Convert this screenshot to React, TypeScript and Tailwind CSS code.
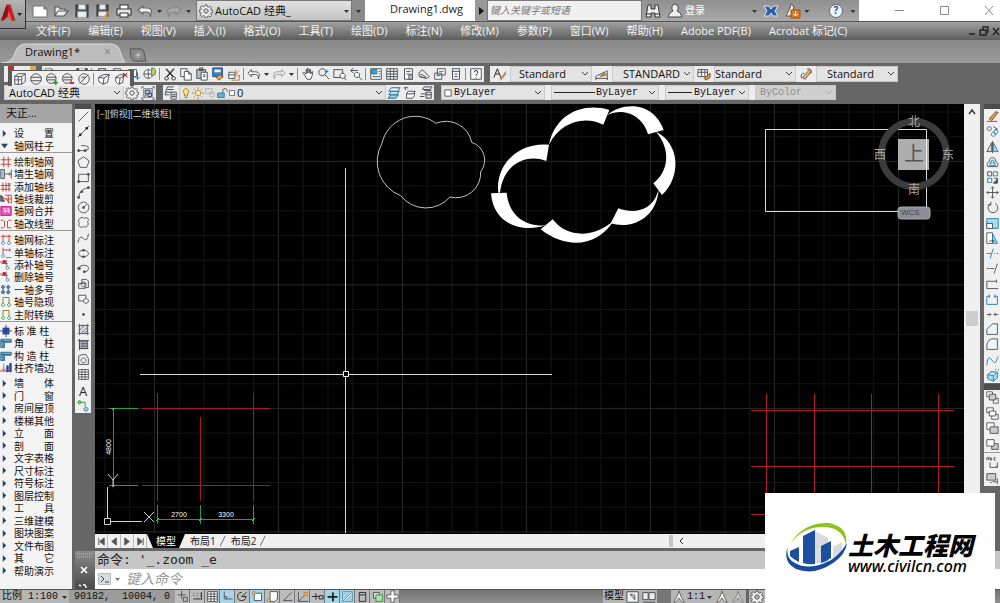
import type { ReactNode } from "react";

// each part of a glyph is [path, stroke, fill] on a 16x16 grid
type Part = [string, string?, string?];

const INK = "#4a4f55";
const BLUE = "#1c7ea6";
const RED = "#c0272d";
const GREEN = "#2f8f3a";
const SKY = "#a8dcee";

const GLYPHS: Record<string, Part[]> = {
  // files and editing
  new: [["M3 2h7l3 3v9H3zM10 2v3h3", "#777", "#fff"]],
  page: [["M1 3h11l3 3v8H1zM12 3v3h3", "#777", "#fff"]],
  open: [["M2 13V4h4l1 2h5v2M2 13l3-5h10l-4 5z", "#555", "#eee"]],
  save: [["M2 2h12v12H2z", "#333", "#4a5563"], ["M5 2h6v4H5zM4 9h8v5H4z", "#ddd", "#eee"]],
  saveas: [["M2 2h11v11H2z", "#333", "#4a5563"], ["M5 2h5v4H5zM4 9h7v4H4z", "#ddd", "#eee"], ["M9 14l5-6", "#e3902c"], ["M10 15l5-6", "#e3902c"]],
  print: [["M4 6V2h8v4", "#333", "#fff"], ["M1 6h14v6H1z", "#333", "#e8e8e8"], ["M4 10h8v4H4z", "#333", "#fff"]],
  preview: [["M3 2h8v12H3z", INK, "#fff"], ["M12 8a3 3 0 1 0 0 6a3 3 0 0 0 0-6M14 13l2 2", RED]],
  publish: [["M2 3h9v8H2z", INK, "#fff"], ["M12 6v8M9 11l3 3 3-3", BLUE]],
  globe: [["M6 3a5 5 0 1 0 .1 0M6 3v10M1 8h10", INK, "#fff"], ["M10 1a4.500 4.500 0 1 1-.1 9V5z", "#6b7a34", "#c3d07c"]],
  cut: [["M3 2l8 9M13 2L5 11M4 11a2 2 0 1 0 .1 0M12 11a2 2 0 1 0 .1 0", "#222"], ["M4 2l8 9M12 2L4 11", "#222"]],
  copy: [["M2 2h7v9H2z", INK, "#fff"], ["M6 5h5l3 3v7H6zM11 5v3h3", INK, "#fff"]],
  paste: [["M2 3h10v10H2zM5 1h4v3H5z", INK, "#bbb"], ["M7 6h7v9H7zM9 9h3M9 11h3", INK, "#fff"]],
  match: [["M2 1h11v10H2z", "#1e4f8e", "#3f7fc1"], ["M4 3h7v3H4z", "none", "#fff"], ["M6 12l4-3 4 2-5 4z", "#8a5a1c", "#e8ac45"]],
  block: [["M2 6h7v7H2zM2 9h7", INK, "#fff"], ["M10 3v5M8 6l4 4M14 4l-4 4M12 10h3M5 15h9V9", "#b98120"]],
  undo: [["M5 3L1 7l4 4V8.500h5q3 0 3 5 3-8-3-8H5z", INK, "#fff"]],
  redo: [["M11 3l4 4-4 4V8.500H6q-3 0-3 5-3-8 3-8h5z", "#999", "#eee"]],
  undoLight: [["M6 3L1 7l5 4V9h4q4 0 3 5 4-9-3-9H6z", "#666", "#eee"]],
  redoLight: [["M10 3l5 4-5 4V9H6q-4 0-3 5-4-9 3-9h4z", "#888", "#aaa"]],
  hand: [["M4 9L2 7l1-1 3 2V3h1v4V2h2v5l1-4h1v5l2-3v4l-2 5H7z", INK, "#fff"]],
  zoom: [["M6 2a4 4 0 1 0 .1 0M9 9l5 5", INK], ["M11 3v4M9 5h4", BLUE]],
  zoomwin: [["M1 3h10v9H1z", INK], ["M11 7a3 3 0 1 0 .1 0M13 12l2 3", INK, "#fff"]],
  zoomprev: [["M5 1L2 4l3 3M2 4h8", INK], ["M9 6a3 3 0 1 0 .1 0M11 11l4 4", INK, "#fff"]],
  props: [["M2 2h12v12H2z", INK, "#fff"], ["M3 3h6v5H3z", BLUE, "#3ba0cc"], ["M11 5h2M11 8h2M4 11h9", INK]],
  table: [["M2 2h12v12H2zM2 5h12M2 8h12M2 11h12M6 2v12M10 2v12", INK, "#fff"]],
  palette: [["M4 2h9v12H4zM6 5h5M6 8h5", INK, "#fff"], ["M9 9h4v5H9z", INK, "#ccc"]],
  sheet: [["M2 7l4-4 3 3 5 5-3 2-8-2zM4 8l6 3M3 11l8 2", INK, "#eee"]],
  markup: [["M5 2h9v7H5zM2 7h8v7H2z", INK, "#fff"], ["M7 5h5M4 10h4", BLUE]],
  calc: [["M4 2h8v12H4zM4 5h8M6 8h4M6 11h4", INK, "#fff"]],
  help: [["M2 2h12v12H2z", INK, "#fff"], ["M6 6q0-2 2-2t2 2-2 3v1M8 12v1", "#224"]],
  // style bars
  textstyle: [["M1 12L5 2l4 10M3 8h4", "#222"], ["M8 14l7-9", "#a0642a"], ["M9 15l6-8", "#a0642a"]],
  dimstyle: [["M1 13h13M1 10v5M14 4v11M2 10l11-5", INK], ["M6 11l4-5 3 3z", "#a0642a", "#c9904d"]],
  tablestyle: [["M1 3h11v8H1zM1 6h11M5 3v8M9 3v8", INK, "#fff"], ["M8 13l7-6v5l-5 3z", "#8f5a25", "#c9904d"]],
  leader: [["M3 13q-2-5 3-6M9 3a3 3 0 1 1 3 5", INK], ["M4 12l8-9 2 2-7 9z", "#8f5a25", "#d9b78c"]],
  // solids and view styles
  box: [["M2 5l4-3h8v9l-4 3H2zM2 5h8v9M10 5l4-3M2 9h8M6 5v9", INK, "#fff"]],
  sphere: [["M8 2a6 6 0 1 0 .1 0M2 6h12M2 10h12", INK, "#eee"]],
  sphereAdd: [["M7 2a5.500 5.500 0 1 0 .1 0M2 6h11M2 9h10", INK, "#eee"], ["M12 9v6M9 12h6", GREEN], ["M12.500 9v6M9 12.500h6", GREEN]],
  sphereSub: [["M7 2a5.500 5.500 0 1 0 .1 0M2 6h11M2 9h10", INK, "#eee"], ["M10 12h5M10 13h5", RED]],
  sphereOff: [["M8 2a6 6 0 1 0 .1 0M3 13L13 3M5 6h5", INK, "#eee"]],
  cube: [["M2 6q4-4 12-3l-2 9-5 2-5-3zM2 6l6 1 6-4M8 7l-1 7", INK, "#fff"]],
  cubeX: [["M2 6q4-4 9-3l-1 9-5 2-3-3zM2 6l5 1 5-3M7 7l-1 7", INK, "#fff"], ["M10 1l5 5M15 1l-5 5", RED], ["M11 1l4 5M15 2l-5 4", RED]],
  // layers
  layers: [["M4 1h7M4 4h7M2 7h7M1 10h5M4 1L1 10", INK], ["M8 7h6v8H8zM9 10h4M9 12h4", INK, "#ddd"]],
  layerA: [["M5 10h8l-3 4H1z", "#176f93", "#9bd3e6"], ["M5 6h9l-3 4H2z", "#176f93", "#c8e8f2"], ["M5 2h10l-3 4H2z", "#176f93", "#e3f3f8"]],
  layerB: [["M6 6h8l-2 3H4zM4 9v5h7l2-3V7", INK, "#fff"], ["M1 2h5M4 1L2 3l2 2", INK]],
  layerC: [["M6 1h9l-2 3H4zM6 5h8M2 9h6M1 12h5", INK], ["M8 7h6v7H8zM8 10h6", INK, "#ddd"]],
  bulb: [["M8 2a4 4 0 0 0-2 7v3h4V9a4 4 0 0 0-2-7M6 14h4", "#9a7a1a", "#ffe875"]],
  sun: [["M8 4.500a3.500 3.500 0 1 0 .1 0M8 0v3M8 13v3M0 8h3M13 8h3M2.500 2.500l2 2M11.500 11.500l2 2M13.500 2.500l-2 2M4.500 11.500l-2 2", "#a37b1c", "#fff2a0"]],
  freeze: [["M2 2h9v7H2zM8 7h6v6H8z", "#b4b4b4", "#ddd"]],
  unlock: [["M2 8h9v6H2z", BLUE, "#5db3d4"], ["M9 8V5q0-3 3-3 3 0 3 4", INK]],
  square: [["M3 3h10v10H3z", "#222", "#fff"]],
  gear: [["M8 5.500a2.500 2.500 0 1 0 .1 0M7 1h2l.5 2 1.500.7 2-1L14.300 4l-1 2 .7 1.200 2 .3v2l-2 .4-.7 1.400 1 1.800-1.500 1.500-2-1-1.400.6L9 16H7l-.5-2-1.500-.7-2 1L1.600 12.800l1-2L2 9.500l-2-.4v-2l2-.4.7-1.400-1-1.800L3.200 2l2 1L6.500 2.500z", "#555", "#eee"]],
  hatchbox: [["M3 3h10v10H3z", "#789", "#bcd"], ["M5 5h5v4H5zM8 8h4v4H8z", INK], ["M1 3V1h2M13 1h2v2M15 13v2h-2M3 15H1v-2M4 12l3-3", INK]],
  hatch2: [["M2 2h12v12H2z", "#4b93b5", "#c7e6f2"], ["M3 6l3-3M3 10l7-7M3 13L13 3M7 13l6-6M11 13l2-2", "#4b93b5"]],
  // drawing tools
  line: [["M2 14L14 2", INK]],
  xline: [["M1 15L15 1", INK], ["M3 11h2v2H3zM11 3h2v2h-2z", "#222", "#222"]],
  pline: [["M2 13h8q4 0 4-3t-4-3H5", INK], ["M1 12h2v2H1zM9 12h2v2H9z", INK, INK]],
  polygon: [["M8 1l7 5-3 8H4L1 6z", INK]],
  rect: [["M2 4h12v9H2z", INK], ["M1 12h2v2H1zM13 3h2v2h-2z", INK, INK]],
  arc: [["M2 14Q3 4 14 2", INK], ["M1 13h2v2H1zM5 6h2v2H5zM13 1h2v2h-2z", INK, INK]],
  circle: [["M8 1.500a6.500 6.500 0 1 0 .1 0M8 8l4-4", INK], ["M7 7h2v2H7z", INK, INK]],
  cloud: [["M5 2q3-1 4 1 4-2 5 1 0 2-1 3 2 3 0 5-2 3-5 1-3 2-5 0-2-2 0-4-2-2-1-4 1-2 3-3z", INK]],
  spline: [["M1 13Q3 3 8 8t6-6", INK]],
  ellipse: [["M8 4C0 4 0 12 8 12s8-8 0-8", INK], ["M7 3h2v2H7zM7 11h2v2H7z", INK, INK]],
  ellarc: [["M2 8q1-4 6-4 7 0 6 5-1 3-5 3", INK], ["M1 7h3v2H1zM8 11h2v2H8z", INK, INK]],
  insert: [["M2 8h8v6H2zM6 8V3h6l2 2v8h-4M8 6a3 3 0 1 0 .1 0", INK]],
  make: [["M2 4h9v7H2z", INK], ["M11 8a3 3 0 1 0 .1 0", INK, "#eee"]],
  point: [["M7 7h2v2H7z", INK, INK]],
  hatch: [["M3 3h10v10H3z", INK, "#d5dbe0"], ["M3 9l6-6M5 13l8-8M9 13l4-4M1 3h14M1 13h14M3 1v14M13 1v14", "#667"]],
  gradient: [["M3 4h10v9H3z", INK, "#aab"], ["M1 3h14M3 1v14M3 13h11M5 7h7M5 10h7", INK]],
  region: [["M2 14V4l4-2h5l3 5v7zM8 6a3 3 0 1 0 .1 0", INK]],
  group: [["M3 2a2 2 0 1 0 .1 0", GREEN, "#7fc77f"], ["M5 4h5v5", GREEN], ["M11 10a2.500 2.500 0 1 0 .1 0", BLUE, "#a6d6ef"]],
  // modify tools
  erase: [["M1 14h13", RED], ["M4 11l8-9 3 1-8 10z", "#7a4a20", "#d2a25a"]],
  copyobj: [["M4 2a2.500 2.500 0 1 0 .1 0M9 2l5 3-3 1", INK], ["M9 9a2.500 2.500 0 1 0 .1 0M12 6a2.500 2.500 0 1 0 .1 0", BLUE]],
  mirror: [["M7 2v11H1z", INK, "#ddd"], ["M9 2v11h6z", BLUE, SKY], ["M8 0v15", INK]],
  offset: [["M2 13q-2-5 2-6 0-5 4-5t4 5q4 1 2 6z", INK], ["M5 12q-2-3 1-3 0-4 2-4t2 4q3 0 1 3z", BLUE, SKY]],
  array: [["M2 1h5v5H2z", INK], ["M9 1h5v5H9zM2 9h5v5H2z", BLUE], ["M10 9h4v5", INK], ["M14 10v5H9z", INK, INK]],
  move: [["M8 1v14M1 8h14M6 3l2-2 2 2M6 13l2 2 2-2M3 6L1 8l2 2M13 6l2 2-2 2", INK]],
  rotate: [["M6 3a6 6 0 1 0 5 0M6 1v4H2", INK]],
  scale: [["M1 2h14v12H1z", BLUE, SKY], ["M1 8h7v6H1z", INK, "#fff"]],
  stretch: [["M1 1h7v13H1z", INK, "#fff"], ["M8 2l6 12H8z", BLUE, SKY], ["M4 11h6M8 9l2 2-2 2", INK]],
  trim: [["M1 8h5M10 8h1M13 8h2M5 14L9 2", BLUE]],
  extend: [["M1 8h3M5 8h5M10 14l4-12", INK]],
  breakAt: [["M1 4h12M1 4v9h14M13 2v4", INK]],
  break2: [["M5 4H1v10h13V4h-4M4 2v4M11 2v4", BLUE]],
  join: [["M1 8h5M10 8h5M4 6l2 2-2 2M12 6l-2 2 2 2", INK]],
  chamfer: [["M1 14V8l7-7h6v13z", INK, "#eaf6fb"]],
  fillet: [["M1 14V9q1-8 8-8h5v13z", INK, "#eaf6fb"]],
  blend: [["M1 14Q2 1 6 6t5 5 4-8", BLUE]],
  explode: [["M2 7l4-4 8 1v7l-5 4-7-3zM2 7l7 1 5-4M9 8v7", BLUE, SKY], ["M11 1l2-1M15 2l1-2", BLUE]],
  front: [["M1 1h7v6H1zM9 9h6v6H9z", INK, "#fff"], ["M4 4h8v7H4z", INK, "#ccc"]],
  back: [["M1 1h8v6H1zM7 9h8v6H7z", INK, "#fff"], ["M4 5h8v6H4z", INK, "#fff"]],
  above: [["M1 1h9v8H1z", INK, "#fff"], ["M5 6h10v8H5z", INK, "#ccc"]],
  below: [["M7 7h8v7H7z", INK, "#ccc"], ["M1 2h9v8H1z", INK, "#fff"]],
  textfront: [["M1 5V2h2v3M5 1v4h2V3H5M12 2h-2v3h2M5 8v6h9l-2-2M14 8v6", INK]],
  hatchback: [["M1 2h11v8H1z", INK, "#ccc"], ["M8 12h6v3M5 13h2M14 8v4", INK]],
  // panel marks
  grid: [["M1 5h14M1 11h14M5 1v14M11 1v14", RED]],
  wallgrid: [["M1 2h5v12H1z", INK, "#9cc7da"], ["M7 8h7M12 6l2 2-2 2M15 2v12", "#334"]],
  addaxis: [["M1 6h13M1 11h13M4 2v12M8 2v12M12 2v12", RED], ["M10 4h5", GREEN]],
  clip: [["M2 4l12 9M7 3h8v11M7 8h8M11 3v11", RED], ["M1 3l5 8H1z", "#333", "#678"]],
  merge: [["M1 2h14v12H1z", "#c2188b", "#e64fb4"], ["M4 5h3v6M9 5h3v6M4 8h8", "#fff"]],
  ltype: [["M1 3h4M11 3h4M1 13h4M9 13h6M6 4v8M10 4v8", RED]],
  dimaxis: [["M1 3h14M4 1v9M12 1v9", RED], ["M4 10a2 2 0 1 0 .1 0M12 10a2 2 0 1 0 .1 0", BLUE]],
  dimone: [["M4 1v9M4 4h10M12 2l2 2-2 2", RED], ["M4 10a2 2 0 1 0 .1 0M8 14h7", BLUE]],
  axisno: [["M0 4h9M2 6h8M8 1v6", RED], ["M4 2h3v3H4z", RED, RED], ["M9 6v4", BLUE], ["M10 10a2 2 0 1 0 .1 0", BLUE]],
  multi: [["M4 2a2 2 0 1 0 .1 0M11 2a2 2 0 1 0 .1 0M4 9a2 2 0 1 0 .1 0M11 9a2 2 0 1 0 .1 0M4 6v4M11 6v4", "#27508f", "#6b8cc0"]],
  hide: [["M4 2v8M4 2h8v8", "#7a6b20"], ["M4 10a2 2 0 1 0 .1 0M12 10a2 2 0 1 0 .1 0", GREEN]],
  column: [["M4 4h8v8H4zM8 0v16M0 8h16", "#1f3c88", "#3555a5"]],
  corner: [["M1 3h14v4H6v7H1z", "#24628a", "#76b0cf"], ["M1 6h13M4 3v11", "#24628a"]],
  flush: [["M0 12h15", RED], ["M9 5h2v8H9zM13 2h2v11h-2z", "#1f3c88", "#3555a5"], ["M5 2v10M3 9l2 3 2-3", "#d43a7a"]],
  // status bar
  infer: [["M7 1v10M2 6h10M9 9h5v5H9z", INK]],
  snap: [["M3 4h1M7 4h1M11 4h1M3 7h1M7 7h1M11 7h1M3 11h9M13 3v9", "#222"]],
  ortho: [["M4 2v9h10", INK], ["M4 8h3v3", INK]],
  polar: [["M7 3a5 5 0 1 0 5 5M7 8l6-5M7 8h6", "#222"]],
  osnap: [["M4 4h9v9H4z", INK, "#fff"], ["M2 2h3v3H2z", "#b77a3c", "#f6dcb8"]],
  osnap3: [["M5 2h9v9l-3 3H5z", INK, "#fff"], ["M2 11h3v3H2z", "#b77a3c", "#f6dcb8"]],
  angle: [["M13 3L3 13h11", INK]],
  ucs: [["M3 2v12h12M3 14l9-9", INK], ["M10 3h4v4h-4z", "#c8801f", "#f1b759"]],
  dyn: [["M1 8h9M6 4v8M10 7h5v4h-5z", "#222"]],
  cross: [["M2 8h12M8 3v11", "#111"], ["M2 9h12M9 3v11", "#111"]],
  quick: [["M4 3h8v11H4zM4 6h8", "#222"]],
  cycle: [["M3 3h7v7H3z", INK, "#ddd"], ["M6 6h8v8H6z", GREEN, "#b4dfb0"]],
  plus: [["M6 1h4v5h5v4h-5v5H6v-5H1V6h5z", "#555", "#fff"]],
  paper: [["M1 2h13v12H1z", INK, "#eee"], ["M5 5l5 6V6z", INK]],
  views: [["M1 3h6v8H1zM8 3h7v8H8zM1 14h14", INK, "#eee"]],
  anno: [["M8 1l2 6 4 7-3-1-3-4-3 4-3 1 4-7z", "#666", "#fff"]],
  annoOn: [["M8 1l2 6 4 7-3-1-3-4-3 4-3 1 4-7z", "#666", "#fff"], ["M12 4v4M10 6h4", "#e3a52c", "#f3c860"]],
  annoOff: [["M8 1l2 6 4 7-3-1-3-4-3 4-3 1 4-7z", "#888", "#ccc"]],
};

const Glyph = ({ name, className = "size-[14px]" }: { name: string; className?: string }) => (
  <svg viewBox="0 0 16 16" className={`block shrink-0 ${className}`} aria-hidden="true">
    {GLYPHS[name].map(([d, stroke = INK, fill = "none"], i) => (
      <path key={i} d={d} stroke={stroke} fill={fill} strokeWidth="1.1" />
    ))}
  </svg>
);

const Tool = ({ name, className = "w-4" }: { name: string; className?: string }) => (
  <button type="button" aria-label={name} className={`flex shrink-0 items-center justify-center ${className}`}>
    <Glyph name={name} />
  </button>
);

const Caret = ({ className = "w-[9px]" }: { className?: string }) => (
  <svg viewBox="0 0 8 8" className={`h-2 shrink-0 ${className}`} aria-hidden="true">
    <path d="M1.500 3h5L4 6z" fill="#333" />
  </svg>
);

const Sep = () => <span className="ml-px mr-[2px] h-3 w-px shrink-0 bg-[#8b8b8b]" />;

type ComboProps = {
  label: string;
  value: string;
  className: string;
  text?: string;
  disabled?: boolean;
  children?: ReactNode;
};

const Combo = ({ label, value, className, text = "text-xs pl-1", disabled, children }: ComboProps) => (
  <div className={`relative flex h-full shrink-0 items-center border border-[#c9c9c9] ${disabled ? "bg-[#cfcfcf]" : "bg-[#e3e3e3]"} ${className}`}>
    <select
      aria-label={label}
      disabled={disabled}
      className={`h-full w-full appearance-none bg-transparent pr-3 leading-3 ${disabled ? "text-[#8c8c8c]" : "text-[#111]"} ${text}`}
    >
      <option>{value}</option>
    </select>
    {children && <div className="pointer-events-none absolute inset-y-0 left-0 flex items-center">{children}</div>}
    <svg viewBox="0 0 8 8" className="pointer-events-none absolute right-[2px] size-2" aria-hidden="true">
      <path d="M1 2l3 3 3-3" fill="none" stroke={disabled ? "#aaa" : "#444"} />
    </svg>
  </div>
);

const QUICK = ["page", "open", "save", "saveas", "print", "undoLight"];

const MENUS = [
  "文件(F)", "编辑(E)", "视图(V)", "插入(I)", "格式(O)", "工具(T)", "绘图(D)", "标注(N)",
  "修改(M)", "参数(P)", "窗口(W)", "帮助(H)", "Adobe PDF(B)", "Acrobat 标记(C)",
];

const TitleBar = () => (
  <div className="flex h-[22px] border-b border-[#555] bg-gradient-to-b from-[#8f8f8f] to-[#a9a9a9] pl-[29px]">
    <div className="flex w-[167px] items-center">
      {QUICK.map((n) => (
        <button key={n} type="button" aria-label={n} className="flex w-[21px] justify-center">
          <Glyph name={n} className="size-4" />
        </button>
      ))}
      <Caret />
      <button type="button" aria-label="redo" className="flex w-5 justify-center">
        <Glyph name="redoLight" className="size-4" />
      </button>
      <Caret />
    </div>
    <div className="relative flex w-[156px] items-center border border-[#777] bg-gradient-to-b from-[#e2e2e2] to-[#c4c4c4]">
      <select aria-label="Workspace" className="h-4 w-full appearance-none bg-transparent pl-[18px] text-[11px] leading-4 text-[#111]">
        <option>AutoCAD 经典_</option>
      </select>
      <div className="pointer-events-none absolute inset-y-0 left-[2px] right-0 flex items-center justify-between">
        <Glyph name="gear" />
        <Caret />
      </div>
    </div>
    <button type="button" aria-label="Customize" className="flex w-[13px] items-center justify-center bg-[#8a8a8a]">
      <Caret />
    </button>
    <h1 className="w-[110px] bg-white pl-[25px] text-[11px] leading-[18px] text-[#222]">Drawing1.dwg</h1>
    <button type="button" aria-label="Expand search" className="flex w-3 items-center justify-center bg-[#999]">
      <svg viewBox="0 0 8 8" className="size-2"><path d="M2 0l5 4-5 4z" fill="#111" /></svg>
    </button>
    <input
      aria-label="Search"
      placeholder="键入关键字或短语"
      className="w-[155px] border border-[#777] bg-[#f0f0f0] pl-[2px] text-[10px] italic placeholder:text-[#777]"
    />
    <div className="flex flex-1 items-center">
      <svg viewBox="0 0 16 16" className="ml-[3px] size-4" aria-hidden="true">
        <path d="M3 2h3v4h4V2h3l2 12h-5v-4H6v4H1z" fill="#eee" stroke="#333" />
        <path d="M1 11h5M10 11h5" stroke="#333" />
      </svg>
      <svg viewBox="0 0 16 16" className="ml-[6px] size-4" aria-hidden="true">
        <path d="M8 1a3.500 4 0 0 1 2 7q4 1 5 6H1q1-5 5-6a3.500 4 0 0 1 2-7z" fill="#eee" stroke="#444" />
      </svg>
      <a href="#login" className="ml-[2px] text-[10px] text-white">登录</a>
      <span className="flex-1" />
      <Caret />
      <svg viewBox="0 0 16 16" className="ml-1 size-4" aria-hidden="true">
        <path d="M1 3h5l2 3 2-3h5l-3 5 3 5h-5l-2-3-2 3H1l3-5z" fill="#2c5fa3" stroke="#dfe8f5" />
      </svg>
      <svg viewBox="0 0 16 16" className="ml-[6px] size-4" aria-hidden="true">
        <path d="M6 1l3 3-3 9H1l4-8z" fill="#eee" stroke="#555" />
        <path d="M6 7h9v8H6z" fill="#e07a1f" stroke="#a44f0c" />
        <path d="M10.500 8v5M8.500 11l2 2 2-2" fill="none" stroke="#fff" />
      </svg>
      <Caret className="ml-[2px] w-2" />
      <button type="button" aria-label="Help" className="ml-[18px] flex size-[14px] items-center justify-center rounded-full border border-[#667] bg-[#eef3fb] text-[10px] font-bold text-[#24509b]">
        ?
      </button>
      <Caret className="ml-[6px] mr-[2px] w-2" />
    </div>
    <div className="flex w-[141px] justify-between bg-white pl-9 pr-[6px] text-[#888]">
      <button type="button" aria-label="Minimize"><svg viewBox="0 0 10 16" className="h-4 w-[10px]"><path d="M0 7.500h9" stroke="currentColor" /></svg></button>
      <button type="button" aria-label="Maximize"><svg viewBox="0 0 10 16" className="h-4 w-[10px]"><path d="M.5 3.500h8v8h-8z" fill="none" stroke="currentColor" /></svg></button>
      <button type="button" aria-label="Close"><svg viewBox="0 0 10 16" className="h-4 w-[10px]"><path d="M1 3l8 9M9 3l-8 9" stroke="currentColor" /></svg></button>
    </div>
  </div>
);

const MenuBar = () => (
  <nav className="flex h-[18px] items-center gap-[18px] bg-gradient-to-b from-[#a0a0a0] via-[#7f7f7f] to-[#5d5d5d] pl-9 text-[11px] leading-[18px] text-[#f4f4f4]">
    {MENUS.map((m) => (
      <button key={m} type="button" className="shrink-0 whitespace-nowrap">{m}</button>
    ))}
    <svg viewBox="0 0 32 12" className="ml-auto h-3 w-8 shrink-0" aria-hidden="true">
      <path d="M1 9h6M12 5h6v5h-6zM15 5V2h5v5h-2M25 3l6 7M31 3l-6 7" fill="none" stroke="#222" strokeWidth="1.400" />
    </svg>
  </nav>
);

const FileTabs = () => (
  <div className="flex h-[23px] items-end bg-gradient-to-b from-[#868686] to-[#9b9b9b]">
    <div className="relative flex h-5 w-[125px] items-start">
      <svg viewBox="0 0 125 20" className="absolute inset-0 h-full w-full" aria-hidden="true">
        <path d="M2 20Q12 20 15 10T27 1h84q7 0 9 7t5 12z" fill="#bcbcbc" stroke="#dadada" />
      </svg>
      <button type="button" className="relative pl-[25px] text-[11px] leading-[18px] text-[#111]">Drawing1*</button>
      <button type="button" aria-label="Close tab" className="relative ml-6 text-xs leading-[18px] text-[#777]">×</button>
    </div>
    <button type="button" aria-label="New tab" className="ml-[3px] h-[17px]">
      <svg viewBox="0 0 20 16" className="h-[14px] w-5">
        <path d="M1 2q0-1 2-1h10q3 0 4 4l2 10H7q-4 0-5-5z" fill="#8a8a8a" stroke="#4d4d4d" />
        <path d="M10 5v6M7 8h6" stroke="#ddd" />
      </svg>
    </button>
  </div>
);

const BAR = "flex h-full shrink-0 items-center bg-[#ececec]";

const STYLE_COMBOS = [
  { icon: "textstyle", label: "Text style", value: "Standard", text: "text-[11px] pl-[8px]" },
  { icon: "dimstyle", label: "Dimension style", value: "STANDARD", text: "text-[11px] pl-[10px]" },
  { icon: "tablestyle", label: "Table style", value: "Standard", text: "text-[11px] pl-0" },
  { icon: "leader", label: "Leader style", value: "Standard", text: "text-[11px] pl-[10px]" },
];

const Toolbars = () => (
  <div className="relative flex flex-col gap-[3px] bg-[#666] pb-1 pl-1 pt-[3px]">
    <div className="flex h-4 gap-[6px]">
      <div className={`${BAR} w-8`}>
        <span className="ml-1 size-[6px] self-start bg-[#b5322f]" />
        <span className="ml-4 h-2 w-[6px] self-start bg-[#d8b04a]" />
      </div>
      <div className={BAR}>
        <Tool name="new" /><Tool name="open" /><Tool name="save" />
        <Sep />
        <Tool name="print" /><Tool name="preview" /><Tool name="publish" /><Tool name="globe" />
        <Sep />
        <Tool name="cut" /><Tool name="copy" /><Tool name="paste" /><Tool name="match" /><Tool name="block" />
        <Sep />
        <Tool name="undo" /><Caret /><Tool name="redo" /><Caret />
        <Sep />
        <Tool name="hand" /><Tool name="zoom" /><Tool name="zoomwin" /><Tool name="zoomprev" />
        <Sep />
        <Tool name="props" /><Tool name="table" /><Tool name="palette" /><Tool name="sheet" /><Tool name="markup" /><Tool name="calc" />
        <Sep />
        <Tool name="help" />
      </div>
      <div className={BAR}>
        {STYLE_COMBOS.map((c) => (
          <div key={c.label} className="flex h-full items-center">
            <Tool name={c.icon} className="w-5" />
            <Combo label={c.label} value={c.value} text={c.text} className="w-[82px]" />
          </div>
        ))}
      </div>
    </div>

    <div className="flex h-[15px] gap-[7px]">
      <div className={BAR}>
        <Combo label="Workspace list" value="AutoCAD 经典" text="text-[11px] pl-1" className="w-[120px]" />
        <Tool name="gear" /><Tool name="hatchbox" />
      </div>
      <div className={BAR}>
        <Tool name="layers" />
        <Combo label="Layer" value="0" text="text-[11px] pl-[57px]" className="w-[207px]">
          <Glyph name="bulb" className="size-3" />
          <Glyph name="sun" className="size-3" />
          <Glyph name="freeze" className="size-3" />
          <Glyph name="unlock" className="size-3" />
          <Glyph name="square" className="size-2" />
        </Combo>
        <Tool name="layerA" /><Tool name="layerB" /><Tool name="layerC" />
      </div>
      <div className={`${BAR} gap-[6px] font-['Liberation_Mono','Noto_Sans_CJK_SC',monospace]`}>
        <Combo label="Color" value="ByLayer" text="text-[10px] pl-3" className="w-[104px]">
          <Glyph name="square" className="ml-px size-[10px]" />
        </Combo>
        <Combo label="Linetype" value="ByLayer" text="text-[10px] pl-[44px]" className="w-[108px]">
          <span className="ml-[2px] h-px w-[41px] bg-[#222]" />
        </Combo>
        <Combo label="Lineweight" value="ByLayer" text="text-[10px] pl-[28px]" className="w-[84px]">
          <span className="ml-[2px] h-px w-6 bg-[#222]" />
        </Combo>
        <Combo label="Plot style" value="ByColor" text="text-[10px] pl-1" className="w-[81px]" disabled />
      </div>
    </div>

    {/* floating solids toolbar */}
    <div className="absolute left-2 top-[7px] flex h-4 items-center border-x-4 border-t border-[#5a5a5a] bg-[#f0f0f0]">
      <Tool name="box" /><Tool name="sphere" /><Tool name="sphereAdd" /><Tool name="sphereSub" /><Tool name="sphereOff" />
      <Sep />
      <Tool name="cube" /><Tool name="cubeX" className="w-[18px]" />
    </div>
  </div>
);

const PANEL_TOP = ["设　　置", "轴网柱子"];

const PANEL_GROUPS = [
  {
    size: "h-[78px] pt-[3px]",
    items: [["grid", "绘制轴网"], ["wallgrid", "墙生轴网"], ["addaxis", "添加轴线"], ["clip", "轴线裁剪"], ["merge", "轴网合并"], ["ltype", "轴改线型"]],
  },
  {
    size: "h-[91px] pt-[3px]",
    items: [["dimaxis", "轴网标注"], ["dimone", "单轴标注"], ["axisno", "添补轴号"], ["axisno", "删除轴号"], ["multi", "一轴多号"], ["hide", "轴号隐现"], ["hide", "主附转换"]],
  },
  {
    size: "h-[53px] pt-[3px]",
    items: [["column", "标 准 柱"], ["corner", "角　　柱"], ["corner", "构 造 柱"], ["flush", "柱齐墙边"]],
  },
];

const PANEL_BOTTOM = [
  "墙　　体", "门　　窗", "房间屋顶", "楼梯其他", "立　　面", "剖　　面", "文字表格", "尺寸标注",
  "符号标注", "图层控制", "工　　具", "三维建模", "图块图案", "文件布图", "其　　它", "帮助演示",
];

const PanelItem = ({ label, icon, open }: { label: string; icon?: string; open?: boolean }) => (
  <button type="button" className="flex min-h-0 items-center whitespace-pre text-left leading-3">
    <span className="flex w-[14px] shrink-0">
      {icon ? (
        <Glyph name={icon} className="size-3" />
      ) : (
        <svg viewBox="0 0 8 8" className="ml-px size-[7px]" aria-hidden="true">
          <path d={open ? "M0 2h8L4 7z" : "M2 0l4 4-4 4z"} fill="#24466b" />
        </svg>
      )}
    </span>
    {label}
  </button>
);

const SidePanel = () => (
  <aside className="flex w-[72px] shrink-0 flex-col bg-[#f3f3f3] text-[10px] text-[#111]">
    <h2 className="h-[19px] bg-[#a5a5a5] pl-[6px] text-[11px] leading-[17px]">天正...</h2>
    <div className="mt-1 grid h-[25px] auto-rows-fr">
      {PANEL_TOP.map((t, i) => <PanelItem key={t} label={t} open={i === 1} />)}
    </div>
    {PANEL_GROUPS.map((g) => (
      <div key={g.size} className={`grid auto-rows-fr border-t border-[#9a9a9a] ${g.size}`}>
        {g.items.map(([icon, label]) => <PanelItem key={label} icon={icon} label={label} />)}
      </div>
    ))}
    <div className="mt-[3px] grid h-[200px] auto-rows-fr">
      {PANEL_BOTTOM.map((t) => <PanelItem key={t} label={t} />)}
    </div>
  </aside>
);

const DRAW_TOOLS = [
  "line", "xline", "pline", "polygon", "rect", "arc", "circle", "cloud", "spline", "ellipse",
  "ellarc", "insert", "make", "point", "hatch", "gradient", "region", "table",
];

const MODIFY_TOOLS = [
  "erase", "copyobj", "mirror", "offset", "array", "move", "rotate", "scale", "stretch",
  "trim", "extend", "breakAt", "break2", "join", "chamfer", "fillet", "blend", "explode",
];

const ORDER_TOOLS = ["front", "back", "above", "below"];

const VTool = ({ name }: { name: string }) => (
  <button type="button" aria-label={name} className="flex min-h-0 items-center justify-center">
    <Glyph name={name} className="size-[13px]" />
  </button>
);

const DrawBar = () => (
  <div className="ml-[3px] w-4 shrink-0">
    <div className="h-[5px] bg-[#4c4c4c]" />
    <div className="grid h-[304px] auto-rows-fr bg-[#f0f0f0]">
      {DRAW_TOOLS.map((n) => <VTool key={n} name={n} />)}
      <button type="button" className="min-h-0 text-[13px] leading-4 text-[#222]">A</button>
      <VTool name="group" />
    </div>
  </div>
);

const ModifyBar = () => (
  <div className="ml-1 w-4 shrink-0">
    <div className="h-[5px] bg-[#4c4c4c]" />
    <div className="grid h-[274px] auto-rows-fr bg-[#f0f0f0]">
      {MODIFY_TOOLS.map((n) => <VTool key={n} name={n} />)}
    </div>
    <div className="mt-px h-[6px] bg-[#4c4c4c]" />
    <div className="grid h-[62px] auto-rows-fr bg-[#f0f0f0]">
      {ORDER_TOOLS.map((n) => <VTool key={n} name={n} />)}
    </div>
    <div className="grid h-[34px] auto-rows-fr border-t border-[#999] bg-[#f0f0f0] pt-[2px]">
      <VTool name="textfront" />
      <VTool name="hatchback" />
    </div>
  </div>
);

// world coordinates of the canvas start at (95, 104)
const GRID_X = Array.from({ length: 36 }, (_, i) => 104.8 + i * 24.8);
const GRID_Y = Array.from({ length: 18 }, (_, i) => 112 + i * 24.7);

const Drawing = () => (
  <svg
    viewBox="95 104 869 429"
    preserveAspectRatio="xMinYMin meet"
    className="block h-full w-full"
    fontFamily="'Liberation Sans','Noto Sans CJK SC',sans-serif"
  >
    {GRID_X.map((x, i) => (
      <path key={x} d={`M${x} 104V533`} stroke={i % 5 === 2 ? "#262b2b" : "#131616"} />
    ))}
    {GRID_Y.map((y, i) => (
      <path key={y} d={`M95 ${y}H964`} stroke={i % 5 === 2 ? "#262b2b" : "#131616"} />
    ))}

    {/* revision clouds */}
    <g transform="translate(360 100) scale(.33333)">
      <path
        d="M228 70A78 78 0 0 1 335 127A56 56 0 0 1 362 215A74 74 0 0 1 270 291A96 96 0 0 1 122 287A110 110 0 0 1 66 130A102 102 0 0 1 228 70z"
        fill="none" stroke="#ddd" strokeWidth="2.600"
      />
      <g fill="#fff">
        <path d="M567 134C585 45 665 5 748 30L730 74C675 45 600 65 567 134z" />
        <path d="M742 45C790 5 880 5 911 90L864 103C850 50 795 20 742 45z" />
        <path d="M888 95C960 130 965 230 906 285L880 250C925 215 935 150 888 95z" />
        <path d="M896 270C890 350 820 390 752 370L775 325C830 345 875 325 890 285z" />
        <path d="M762 360C715 440 620 450 542 388L578 358C620 415 705 415 762 360z" />
        <path d="M558 376C480 400 400 370 393 280L440 278C445 340 490 382 558 376z" />
        <path d="M415 278C405 200 470 125 567 134L559 183C500 160 430 190 420 278z" />
      </g>
    </g>

    <path d="M765.500 129.500h161v82h-161z" fill="none" stroke="#ddd" />

    {/* view cube */}
    <circle cx="914" cy="154" r="32.500" fill="none" stroke="#3c3c3c" strokeWidth="7" />
    <path d="M898 139h31v31h-31z" fill="#bdbdbd" fillOpacity=".92" />
    <path d="M926.500 139v31" stroke="#eee" />
    <g fill="#a8a8a8" fontSize="12" textAnchor="middle">
      <text x="914" y="126">北</text>
      <text x="914" y="194">南</text>
      <text x="880" y="159">西</text>
      <text x="948" y="159">东</text>
      <text x="914" y="161" fontSize="20" fill="#555">上</text>
    </g>
    <rect x="898" y="207" width="32" height="12" rx="3" fill="#8d8d97" stroke="#aaa" />
    <text x="901" y="215" fontSize="8" fill="#444">WCS</text>

    {/* crosshair */}
    <path d="M345.500 168V533M140 374.500H552" stroke="#d8d8d8" />
    <path d="M343.500 371.500h5v5h-5z" fill="#000" stroke="#fff" />

    {/* column grid with dimensions */}
    <path d="M142 408.500h128M142 485.500h128M157.500 393v108M200.500 417v84M253.500 393v108" stroke="#a81824" />
    <path d="M113.500 408v79M109 408.500h29M109 485.500h29M157 519.500h97M157.500 505v19M200.500 505v19M253.500 505v19" stroke="#2e9a3a" />
    <path d="M112 410l3-2M112 487l3-2M156 521l3-3M199 521l3-3M252 521l3-3" stroke="#53d860" />
    <g fill="#fff" fontSize="7" textAnchor="middle">
      <text transform="translate(111 447) rotate(-90)">4800</text>
      <text x="179" y="517">2700</text>
      <text x="226" y="517">3300</text>
    </g>
    <path d="M108 474l5 6 5-6M113 480v6M144 512l10 10M154 512l-10 10M107.500 487v32M110 521.500h32M104.500 518.500h6v6h-6z" fill="none" stroke="#d0d0d0" />

    <path d="M766.500 394v139M814.500 394v139M871.500 394v139M938.500 394v139M751 410.500h203M751 466.500h203M751 514.500h203" stroke="#b01c22" />
  </svg>
);

const LAYOUTS = ["布局1", "布局2"];

const LayoutTabs = () => (
  <div className="flex h-[14px] items-center bg-[#f0f0f0] text-[10px] leading-[14px] text-[#222]">
    {["M3 1v8M9 1v8L4 5z", "M8 1v8L3 5z", "M3 1v8l5-4z", "M9 1v8M3 1v8l5-4z"].map((d) => (
      <button key={d} type="button" aria-label="Scroll tabs" className="flex h-full w-[13px] items-center justify-center border-r border-[#bbb]">
        <svg viewBox="0 0 12 10" className="h-[9px] w-[11px]"><path d={d} fill="#555" stroke="#555" /></svg>
      </button>
    ))}
    <div className="relative">
      <svg viewBox="0 0 38 14" className="absolute inset-0 h-full w-full" preserveAspectRatio="none"><path d="M0 0h38l-6 14H6z" fill="#000" /></svg>
      <button type="button" className="relative px-[9px] text-white">模型</button>
    </div>
    {LAYOUTS.map((l) => (
      <button key={l} type="button" className="flex items-center pl-[5px]">
        {l}
        <svg viewBox="0 0 8 14" className="ml-1 h-[14px] w-[6px]"><path d="M0 14L7 0" stroke="#444" /></svg>
      </button>
    ))}
    <span className="flex-1" />
    <span className="h-3 w-1 bg-[#c4c4c4]" />
    <button type="button" aria-label="Scroll left" className="mr-[289px] w-[18px]">
      <svg viewBox="0 0 8 8" className="mx-auto size-2"><path d="M5 1L2 4l3 3" fill="none" stroke="#222" /></svg>
    </button>
  </div>
);

const Canvas = () => (
  <div className="ml-1 flex min-w-0 flex-1 flex-col">
    <div className="flex min-h-0 flex-1">
      <div className="relative min-w-0 flex-1 bg-black">
        <Drawing />
        <span className="absolute left-[2px] top-1 font-['Liberation_Sans','Noto_Sans_CJK_SC',sans-serif] text-[9px] leading-3 text-[#ccc]">[−][俯视][二维线框]</span>
      </div>
      <div className="w-4 shrink-0 bg-[#f0f0f0]">
        <button type="button" aria-label="Scroll up" className="flex h-4 w-full items-center justify-center">
          <svg viewBox="0 0 8 8" className="size-2"><path d="M1 6l3-4 3 4" fill="none" stroke="#333" strokeWidth="1.400" /></svg>
        </button>
        <div className="mx-auto mt-[191px] h-[15px] w-3 bg-[#cdcdcd]" />
      </div>
    </div>
    <LayoutTabs />
  </div>
);

const CommandLine = () => (
  <section className="mt-[3px] flex h-[38px] shrink-0">
    <div className="ml-[3px] flex w-5 shrink-0 flex-col items-center bg-gradient-to-b from-[#8a8a8a] to-[#4a4a4a] text-white">
      <svg viewBox="0 0 20 38" className="h-[38px] w-5" aria-hidden="true">
        <path d="M2 3h15M2 6h15" stroke="#bbb" strokeDasharray="1 1" />
        <path d="M6 16l6 6M12 16l-6 6" stroke="#fff" strokeWidth="1.700" />
        <path d="M4 34l2 1M8 34q3-1 3 3" stroke="#fff" fill="none" strokeWidth="1.500" />
      </svg>
    </div>
    <div className="flex min-w-0 flex-1 flex-col">
      <p className="h-[18px] whitespace-pre bg-[#c6c6c6] pl-[2px] font-['DejaVu_Sans_Mono','Noto_Sans_CJK_SC',monospace] text-[13px] leading-[18px] text-[#222]">
        命令: '_.zoom _e
      </p>
      <label className="flex h-5 items-center bg-white">
        <svg viewBox="0 0 24 14" className="ml-[3px] h-[14px] w-6" aria-hidden="true">
          <path d="M.5 1.500h12v11H.5z" fill="#d5dde2" stroke="#b5bcc0" />
          <path d="M3 4l3 3-3 3M7 10h4" fill="none" stroke="#444" />
          <path d="M17 6h5l-2.500 3z" fill="#777" />
        </svg>
        <input aria-label="Command" placeholder="键入命令" className="ml-1 flex-1 text-sm italic leading-5 outline-none placeholder:text-[#999]" />
      </label>
    </div>
  </section>
);

const STATUS_TOOLS: [string, boolean][] = [
  ["infer", false], ["snap", false], ["table", false], ["ortho", true], ["polar", false],
  ["osnap", true], ["osnap3", false], ["angle", false], ["ucs", false], ["dyn", false],
  ["cross", true], ["hatch2", true], ["quick", false], ["cycle", false], ["plus", false],
];

const StatusBar = () => (
  <footer className="flex h-[14px] shrink-0 items-center overflow-hidden border-t border-[#555] bg-gradient-to-b from-[#747474] to-[#8f8f8f] font-['Liberation_Mono','Noto_Sans_CJK_SC',monospace] text-[10px] leading-[14px] text-[#111]">
    <button type="button" className="flex h-full w-[69px] items-center whitespace-pre bg-[#b5b5b5] pl-[2px]">
      比例 1:100
      <Caret className="ml-[2px] w-[9px]" />
    </button>
    <span className="h-full w-[106px] whitespace-pre bg-[#9c9c9c] pl-[5px]">90182,  10004, 0</span>
    {STATUS_TOOLS.map(([name, on]) => (
      <button
        key={name}
        type="button"
        aria-label={name}
        aria-pressed={on}
        className={`flex h-full flex-1 items-center justify-center border-r border-[#777] ${on ? "bg-[#a5d5e6]" : "bg-[#bdbdbd]"} max-w-[15px]`}
      >
        <Glyph name={name} className="size-[13px]" />
      </button>
    ))}
    <span className="flex-1" />
    <div className="mr-[235px] flex h-full items-center bg-[#b5b5b5]">
      <button type="button" className="px-px">模型</button>
      <Tool name="paper" /><Tool name="views" />
      <span className="h-full w-[14px] bg-[#777]" />
      <Tool name="anno" />
      <button type="button">1:1</button>
      <Caret />
      <Tool name="annoOn" /><Tool name="annoOff" />
      <span className="h-full w-[3px] bg-[#666]" />
      <Tool name="gear" />
    </div>
  </footer>
);

const SiteBadge = () => (
  <a href="#home" className="absolute bottom-0 right-[5px] flex h-[110px] w-[230px] items-center bg-white pl-5">
    <svg viewBox="0 0 64 56" className="mt-1 h-14 w-16 shrink-0" aria-hidden="true">
      <path d="M28 8l15 8v25H28zM48 25l9-5v14l-9 8z" fill="#d8dadd" />
      <path d="M18 14l12-6v34q-6 1-12-1z" fill="#1d4fa0" />
      <path d="M5 29l9-4v15q-6-3-9-6zM36 24l10-5v17q-5 4-10 5z" fill="#1d4fa0" />
      <path d="M5 22Q18 0 44 1q20 4 17 22Q58 6 40 5 18 4 5 22z" fill="#8fc31f" />
      <path d="M3 24q-6 16 8 23 18 7 37-6 13-9 14-20-9 15-22 20-18 7-30 0Q0 36 3 24z" fill="#174a9c" />
    </svg>
    <div className="-ml-px mt-3 text-black">
      <p className="whitespace-nowrap font-['Noto_Sans_CJK_SC',sans-serif] text-[25px] font-black italic leading-6">土木工程网</p>
      <p className="font-['Noto_Sans',sans-serif] text-base font-medium italic leading-5">www.civilcn.com</p>
    </div>
  </a>
);

export default function App() {
  return (
    <div className="relative flex h-screen flex-col overflow-hidden bg-[#666] font-['Open_Sans','Noto_Sans_CJK_SC',sans-serif]">
      <header className="relative shrink-0">
        <TitleBar />
        <MenuBar />
        <button type="button" aria-label="Application menu" className="absolute left-0 top-0 flex h-[29px] w-[26px] items-center border-b border-r border-[#333] bg-gradient-to-b from-[#b5b5b5] to-[#8d8d8d]">
          <svg viewBox="0 0 26 28" className="h-7 w-[26px]">
            <path d="M7 4h4l5 17h-4l-3-5-5 5H1z" fill="#c21f1f" />
            <path d="M7 4L1 21l6-5 2-5z" fill="#8e1010" />
            <path d="M9 11l4 10-5-5z" fill="#ee5a4c" />
            <path d="M18 13h5l-2.500 3z" fill="#222" />
          </svg>
        </button>
        <FileTabs />
        <Toolbars />
      </header>
      <main className="flex min-h-0 flex-1">
        <SidePanel />
        <div className="flex min-w-0 flex-1 flex-col">
          <div className="flex min-h-0 flex-1">
            <DrawBar />
            <Canvas />
            <ModifyBar />
          </div>
          <CommandLine />
        </div>
      </main>
      <StatusBar />
      <SiteBadge />
    </div>
  );
}
